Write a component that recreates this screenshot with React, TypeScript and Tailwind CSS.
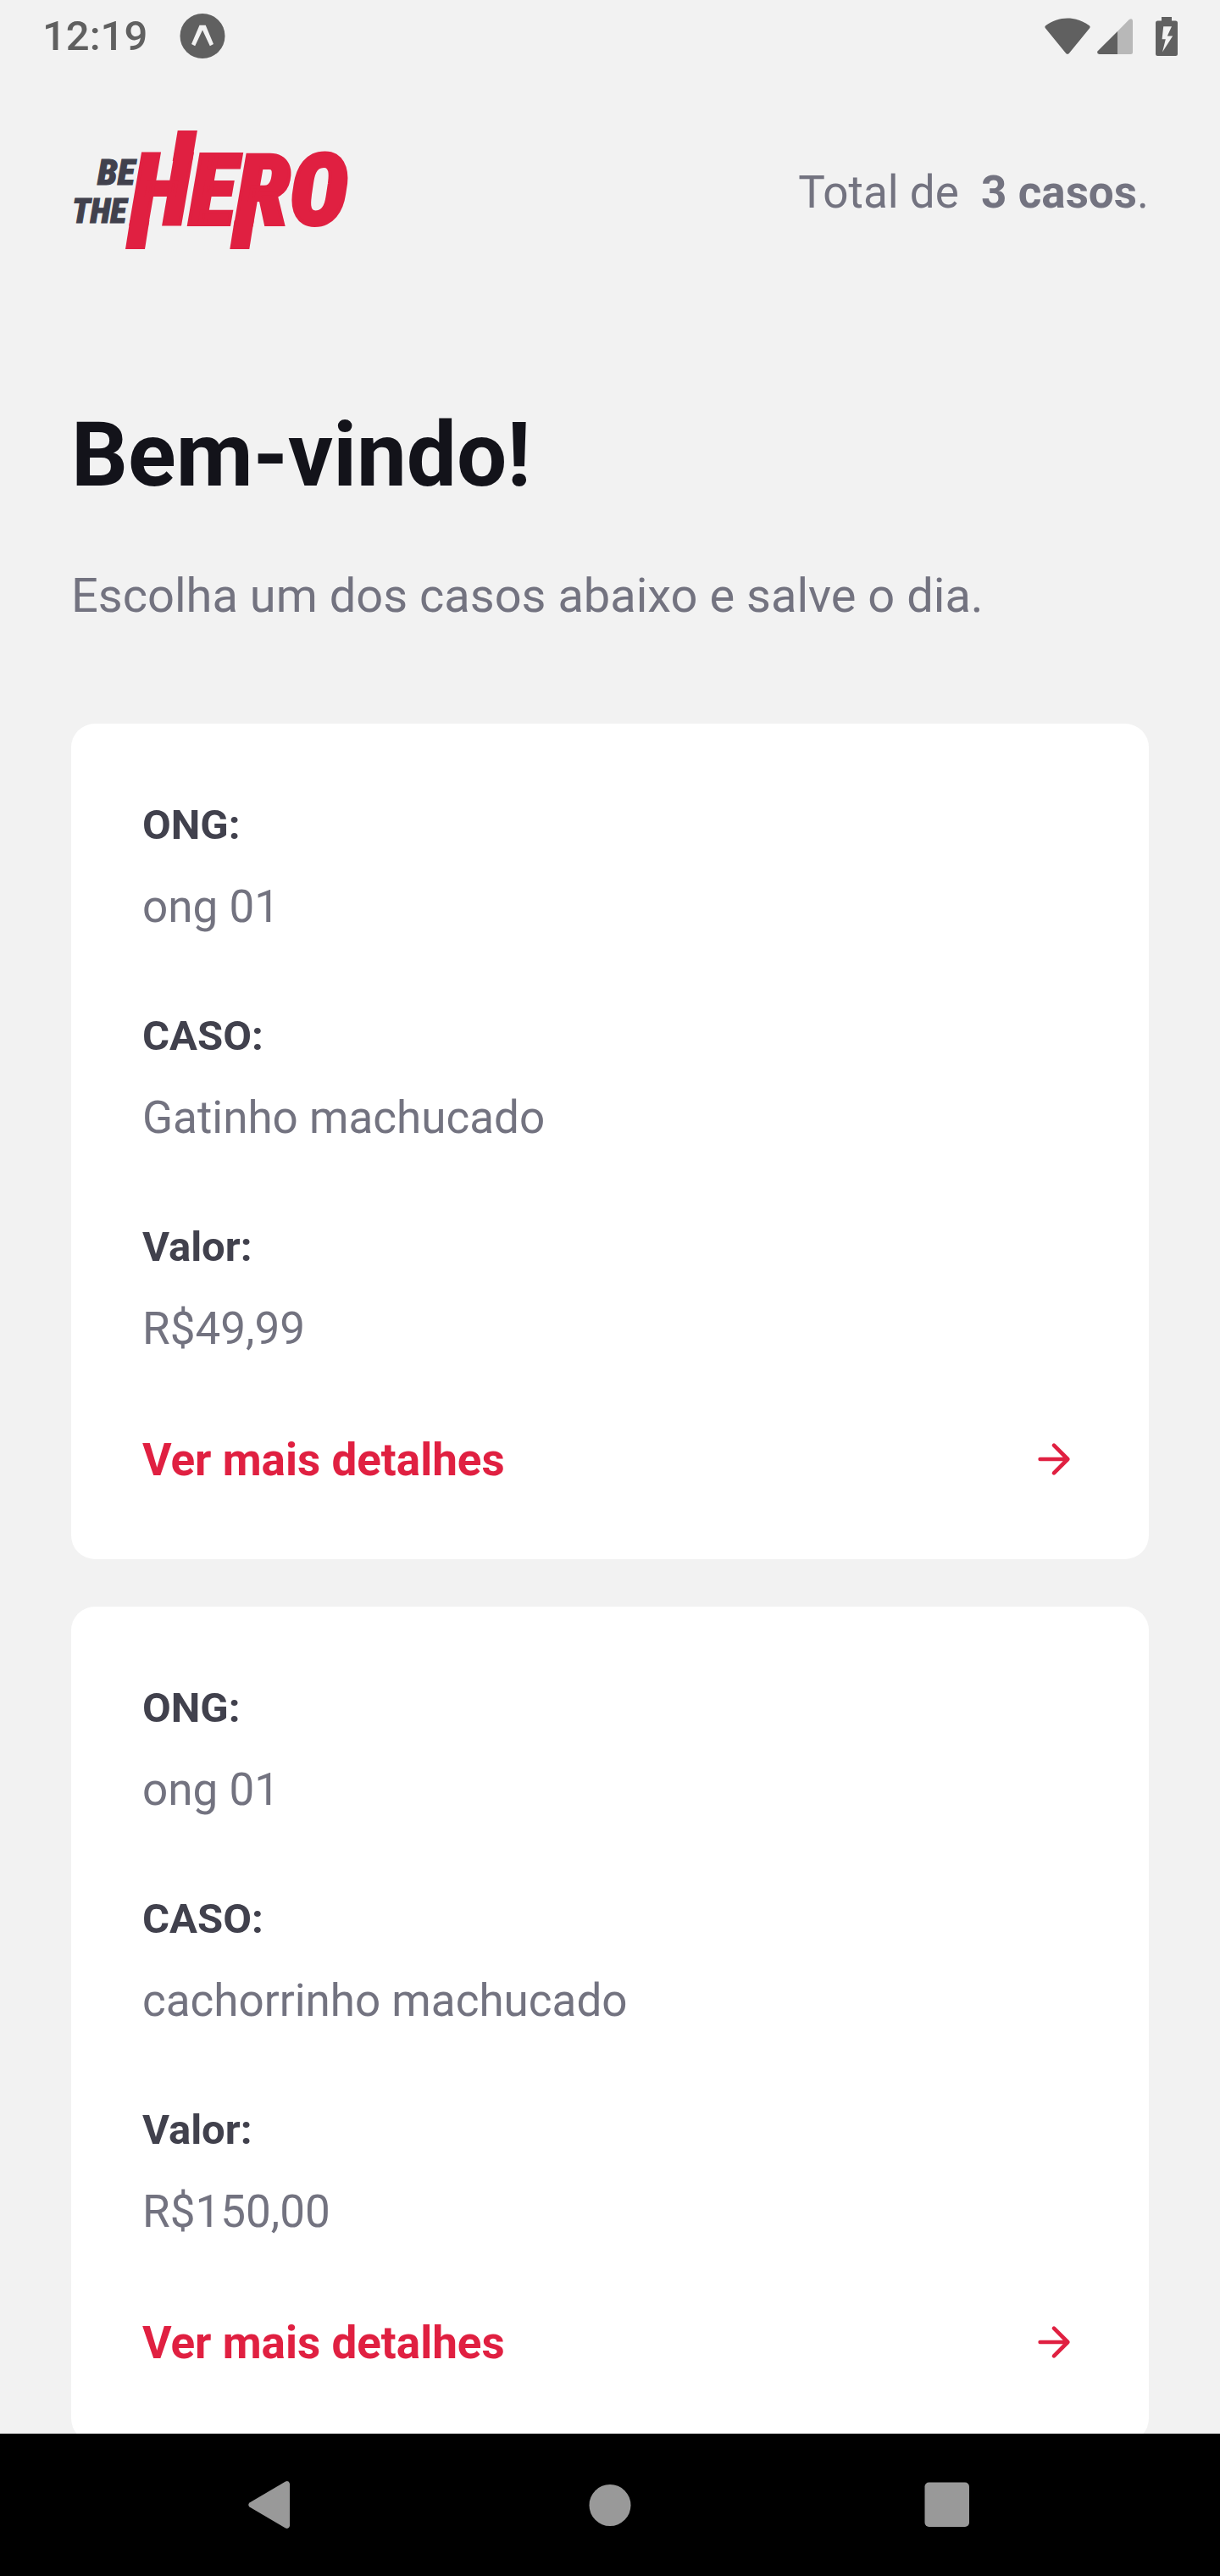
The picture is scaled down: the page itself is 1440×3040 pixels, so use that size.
const cases = [
  { ong: "ong 01", title: "Gatinho machucado", value: "R$49,99" },
  { ong: "ong 01", title: "cachorrinho machucado", value: "R$150,00" },
];

function ExpoIcon() {
  return (
    <svg viewBox="0 0 54 54" className="size-[54px]" aria-hidden="true">
      <circle cx="27" cy="26.5" r="26.5" fill="#606060" />
      <path d="M23.5 13.7h7.2L40 36l-4.2 2.2L27 19.5 18.2 38.2 14 36z" fill="#f2f2f2" />
    </svg>
  );
}

function WifiIcon() {
  return (
    <svg viewBox="0 0 54 44" className="h-11 w-[54px]" aria-hidden="true">
      <path
        d="M1.2 9.2C16.5-2.4 37.5-2.4 52.8 9.2q1.5 1.4.3 3.1L28.800 42q-1.800 1.700-3.600 0L.9 12.300q-1.200-1.700.3-3.100z"
        fill="#606060"
      />
    </svg>
  );
}

function SignalIcon() {
  return (
    <svg viewBox="0 0 42 42" className="size-[42px]" aria-hidden="true">
      <path d="M24 15 37.8.9Q41.5-1 42 2.5V39.5Q42 42 39.5 42H24z" fill="#b8b8b8" />
      <path d="M24 15V42H2.5Q-1 41.5.7 38.2z" fill="#606060" />
    </svg>
  );
}

function BatteryIcon() {
  return (
    <svg viewBox="0 0 26 46" className="h-[46px] w-[26px]" aria-hidden="true">
      <path
        d="M7 0h12v4.5h4.5Q26 4.5 26 7v36.5q0 2.5-2.5 2.5h-21Q0 46 0 43.5V7q0-2.5 2.5-2.5H7z"
        fill="#606060"
      />
      <path d="M9.2 11.3h9.8L13.8 22.5h6.4L8 41.5l3.8-15.3H7.6z" fill="#f2f2f2" />
    </svg>
  );
}

function Logo() {
  return (
    <svg
      viewBox="0 0 332 140"
      className="h-[140px] w-[332px] overflow-visible"
      role="img"
      aria-label="Be The Hero"
    >
      <g fontFamily="'Roboto Condensed','Roboto',sans-serif" fontStyle="italic" fontWeight="900">
        <g fill="#41414d" stroke="#41414d" strokeWidth="1">
          <text x="31" y="64" fontSize="43">BE</text>
          <text x="1" y="109" fontSize="40">THE</text>
        </g>
        <text x="71" y="111" fontSize="116" fill="#e02041" stroke="#e02041" strokeWidth="4">
          HERO
        </text>
      </g>
      {/* Stripes that run past the lettering, above and below */}
      <g fill="#e02041">
        <path d="M119.700 36 125.700 0h23.200l-6 36z" />
        <path d="M69.400 106h23l-5.400 34h-23z" />
        <path d="M192.700 106h23l-5.400 34h-23z" />
      </g>
    </svg>
  );
}

function ArrowRight() {
  return (
    <svg
      viewBox="0 0 24 24"
      className="size-14"
      fill="none"
      stroke="#e02041"
      strokeWidth="2"
      strokeLinecap="round"
      strokeLinejoin="round"
      aria-hidden="true"
    >
      <path d="M5 12h14M12 5l7 7-7 7" />
    </svg>
  );
}

function Field({ label, value }: { label: string; value: string }) {
  return (
    <div className="flex flex-col gap-7">
      <dt className="text-[49px] leading-[69px] font-bold text-[#41414d]">{label}</dt>
      <dd className="text-[53px] leading-[68px] text-[#737380]">{value}</dd>
    </div>
  );
}

export default function App() {
  return (
    <div className="flex h-screen flex-col bg-[#f2f2f2] font-['Roboto',sans-serif]">
      <div className="flex items-center justify-between px-[50px] pt-4 pb-[14px] text-[#606060]">
        <div className="flex items-center gap-[38px]">
          <span className="text-[49px] leading-[54px] font-medium">12:19</span>
          <ExpoIcon />
        </div>
        <div className="flex items-center">
          <WifiIcon />
          <span className="ml-2">
            <SignalIcon />
          </span>
          <span className="ml-[27px]">
            <BatteryIcon />
          </span>
        </div>
      </div>

      <main className="flex min-h-0 flex-1 flex-col px-[84px] pt-[70px]">
        <header className="flex items-center justify-between">
          <Logo />
          <p className="pt-1.5 text-[53px] leading-[62px] whitespace-pre text-[#737380]">
            {"Total de  "}
            <strong className="font-bold">3 casos</strong>.
          </p>
        </header>

        <h1 className="mt-[168px] text-[105px] leading-[152px] font-bold text-[#13131a]">Bem-vindo!</h1>
        <p className="mt-[54px] text-[56px] leading-[70px] text-[#737380]">
          Escolha um dos casos abaixo e salve o dia.
        </p>

        <ul className="mt-[116px] flex min-h-0 flex-1 flex-col gap-14 overflow-y-auto [scrollbar-width:none]">
          {cases.map((item) => (
            <li key={item.title} className="shrink-0 rounded-[28px] bg-white px-[84px] pt-[85px] pb-[83px]">
              <dl className="flex flex-col gap-[84px]">
                <Field label="ONG:" value={item.ong} />
                <Field label="CASO:" value={item.title} />
                <Field label="Valor:" value={item.value} />
              </dl>
              <button type="button" className="mt-[84px] flex w-full items-center justify-between">
                <span className="pt-1 text-[53px] leading-[67px] font-bold text-[#e02041]">
                  Ver mais detalhes
                </span>
                <ArrowRight />
              </button>
            </li>
          ))}
        </ul>
      </main>

      <nav aria-label="Sistema" className="grid grid-cols-3 bg-black px-[120px] py-[49px]">
        <button type="button" aria-label="Voltar" className="flex justify-center">
          <svg viewBox="0 0 70 70" className="size-[70px]">
            <path d="M9.500 32.500 52 7.500q4-1.500 5 2.500v50q-1 4-5 2.500L9.500 37.500q-2.500-2.500 0-5z" fill="#999" />
          </svg>
        </button>
        <button type="button" aria-label="Início" className="flex justify-center">
          <svg viewBox="0 0 70 70" className="size-[70px]">
            <circle cx="35" cy="35.500" r="24.500" fill="#999" />
          </svg>
        </button>
        <button type="button" aria-label="Recentes" className="flex justify-center">
          <svg viewBox="0 0 70 70" className="size-[70px]">
            <rect x="6.500" y="8.500" width="52.500" height="52.500" rx="5" fill="#999" />
          </svg>
        </button>
      </nav>
    </div>
  );
}
